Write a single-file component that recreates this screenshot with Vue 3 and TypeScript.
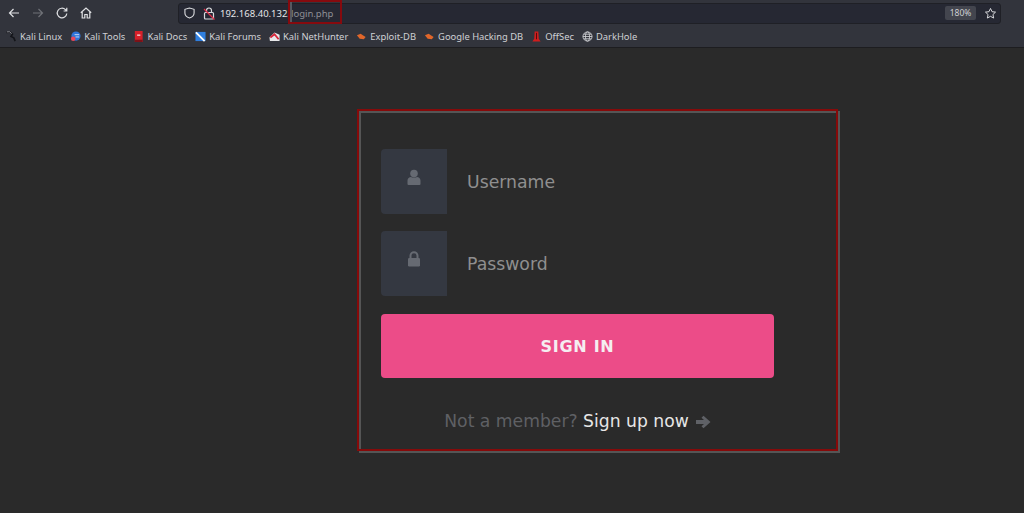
<script setup lang="ts">
interface Bookmark {
  label: string;
  icon: string;
}

const bookmarks: Bookmark[] = [
  { label: 'Kali Linux', icon: 'kali' },
  { label: 'Kali Tools', icon: 'tools' },
  { label: 'Kali Docs', icon: 'docs' },
  { label: 'Kali Forums', icon: 'forums' },
  { label: 'Kali NetHunter', icon: 'nethunter' },
  { label: 'Exploit-DB', icon: 'exploit' },
  { label: 'Google Hacking DB', icon: 'exploit' },
  { label: 'OffSec', icon: 'offsec' },
  { label: 'DarkHole', icon: 'globe' },
];
</script>

<template>
  <div class="page">
    <header class="chrome">
      <div class="toolbar">
        <nav class="nav-buttons">
          <svg class="nav-icon" viewBox="0 0 12 12"><path d="M11 6H1.500M5.500 2 1.500 6l4 4" /></svg>
          <svg class="nav-icon dim" viewBox="0 0 12 12"><path d="M1 6h9.500M6.500 2l4 4-4 4" /></svg>
          <svg class="nav-icon" viewBox="0 0 12 12"><path d="M10.800 6.500A4.800 4.800 0 1 1 9.400 2.600L10.800 4M10.800 0.800V4H7.600" /></svg>
          <svg class="nav-icon" viewBox="0 0 12 12"><path d="M0.800 5.800 6 1l5.200 4.800M2.200 4.800V11h2.600V7.500h2.400V11h2.600V4.800" /></svg>
        </nav>
        <div class="urlbar">
          <svg class="shield" viewBox="0 0 12 13"><path d="M6 1 1 2.500V6.500c0 2.700 2.400 4.600 5 5.500 2.600-.9 5-2.800 5-5.500V2.500z" /></svg>
          <svg class="lock" viewBox="0 0 12 13">
            <rect x="1.500" y="5.500" width="9" height="6.500" rx="1" />
            <path d="M3.500 5.500V3.500a2.500 2.500 0 0 1 5 0V5.500" />
            <path class="slash" d="M1 2 11.500 12.500" />
          </svg>
          <span class="host">192.168.40.132</span><span class="path">/login.php</span>
          <span class="zoom-badge">180%</span>
          <svg class="star" viewBox="0 0 16 16"><path d="M8 1.800l1.900 4 4.300.500-3.200 3 .900 4.300L8 11.500l-3.900 2.100.900-4.300-3.200-3 4.300-.500z" /></svg>
        </div>
        <div class="url-highlight"></div>
      </div>
      <div class="bookmarks">
        <span v-for="b in bookmarks" :key="b.label" class="bookmark">
          <svg class="fav" viewBox="0 0 12 12">
            <template v-if="b.icon === 'kali'">
              <path d="M0.500 1.500 4 1 7 3.500 5.500 6 8.500 7.500 10 11" fill="none" stroke="#14151a" stroke-width="1.800" />
              <path d="M1 1 4 0.800 6 3" fill="none" stroke="#b8bac0" stroke-width="0.800" />
            </template>
            <template v-else-if="b.icon === 'tools'">
              <circle cx="6.500" cy="5.500" r="5" fill="#2f74d8" />
              <circle cx="3.500" cy="8.500" r="2.500" fill="#e8485a" />
              <path d="M5 4h5M6 6.500h4" stroke="#cfe0f8" stroke-width="1" />
            </template>
            <template v-else-if="b.icon === 'docs'">
              <rect x="2" y="0" width="8.500" height="12" fill="#d6202a" />
              <rect x="2" y="9.500" width="8.500" height="2.500" fill="#7d1218" />
              <path d="M4.500 4.500h3.500" stroke="#fff" stroke-width="1.200" />
            </template>
            <template v-else-if="b.icon === 'forums'">
              <rect x="0.500" y="1" width="11" height="10" fill="#2f7fe0" />
              <path d="M1 1.500 10.500 11" stroke="#fff" stroke-width="2" />
            </template>
            <template v-else-if="b.icon === 'nethunter'">
              <path d="M0.500 7 6 1.500 11.500 4V11H1z" fill="#e8e8ea" />
              <path d="M1.500 7 6 3.500 10.500 9" fill="none" stroke="#d5263a" stroke-width="2" />
            </template>
            <template v-else-if="b.icon === 'exploit'">
              <path d="M1 4.500 5 3l5.500 3.500L8.500 9 4 8.500z" fill="#e0662a" />
            </template>
            <template v-else-if="b.icon === 'offsec'">
              <path d="M4 0.500h4L8.500 8.500l2 3h-9l2-3z" fill="#cf1d1d" />
              <path d="M6 2v7" stroke="#4a0a0a" stroke-width="1" />
            </template>
            <template v-else>
              <g fill="none" stroke="#d5d6d9" stroke-width="0.900">
                <circle cx="6" cy="6" r="5" />
                <ellipse cx="6" cy="6" rx="2.200" ry="5" />
                <path d="M1 6h10M1.800 3.500h8.400M1.800 8.500h8.400" />
              </g>
            </template>
          </svg>
          {{ b.label }}
        </span>
      </div>
    </header>

    <main class="content">
      <section class="card">
        <div class="field">
          <span class="field-icon">
            <svg viewBox="0 0 14 16"><circle cx="7" cy="4.500" r="3.800" /><path d="M0.500 15v-3.500C0.500 9.300 2.300 8 4 8c1 .8 5 .8 6 0 1.700 0 3.500 1.300 3.500 3.500V15a1 1 0 0 1-1 1h-11a1 1 0 0 1-1-1z" /></svg>
          </span>
          <span class="placeholder">Username</span>
        </div>
        <div class="field">
          <span class="field-icon">
            <svg viewBox="0 0 14 16"><path d="M2.500 7V4.800a4.500 4.500 0 0 1 9 0V7h-2V4.800a2.500 2.500 0 0 0-5 0V7z" /><rect x="1" y="7" width="12" height="8.500" rx="1.200" /></svg>
          </span>
          <span class="placeholder">Password</span>
        </div>
        <button class="submit" type="button">SIGN IN</button>
        <p class="signup">
          Not a member? <a class="signup-link">Sign up now</a>
          <svg class="arrow" viewBox="0 0 16 14"><path d="M8.500 0.800 15.500 7l-7 6.200-2-2L9 9H1V5h8L6.500 2.800z" /></svg>
        </p>
      </section>
    </main>
  </div>
</template>

<style>
html,
body {
  margin: 0;
  background: #2a2a2a;
}
</style>

<style scoped>
.page {
  height: 513px;
  display: flex;
  flex-direction: column;
  overflow: hidden;
  background: #2a2a2a;
  font-family: "DejaVu Sans", sans-serif;
}
.chrome {
  height: 47px;
  background: #32343c;
  border-bottom: 1px solid #1d1d20;
  font-family: "Noto Sans", "Open Sans", sans-serif;
  color: #d8d9dc;
}
.toolbar {
  position: relative;
  height: 25px;
  display: flex;
  align-items: center;
}
.nav-buttons {
  width: 178px;
  display: flex;
  gap: 12px;
  padding-left: 8px;
  box-sizing: border-box;
}
.nav-icon {
  width: 12px;
  height: 12px;
  fill: none;
  stroke: #dfe0e3;
  stroke-width: 1.200;
}
.nav-icon.dim {
  stroke: #6f7177;
}
.urlbar {
  width: 823px;
  height: 21px;
  margin-top: 1px;
  box-sizing: border-box;
  display: flex;
  align-items: center;
  background: #262833;
  border: 1px solid #1f2026;
  border-radius: 3px;
  font-size: 9.500px;
  padding-left: 5px;
}
.shield {
  width: 11px;
  height: 12px;
  fill: none;
  stroke: #dcdde0;
  stroke-width: 1.200;
}
.lock {
  width: 12px;
  height: 13px;
  margin-left: 8px;
  margin-right: 5px;
  fill: none;
  stroke: #d8d9dc;
  stroke-width: 1.200;
}
.lock .slash {
  stroke: #e0304a;
}
.host {
  color: #e4e5e7;
}
.path {
  color: #8f9096;
}
.zoom-badge {
  margin-left: auto;
  width: 31px;
  height: 14px;
  line-height: 14px;
  text-align: center;
  font-size: 8.500px;
  color: #cfd0d4;
  background: #43454e;
  border-radius: 2px;
}
.star {
  width: 13px;
  height: 13px;
  margin: 0 3px 0 8px;
  fill: none;
  stroke: #dcdde0;
  stroke-width: 1.200;
}
.url-highlight {
  position: absolute;
  left: 288px;
  top: 0;
  width: 54px;
  height: 24px;
  box-sizing: border-box;
  border: 2px solid #860a0e;
  box-shadow: inset 2px 0 0 #565860;
}
.bookmarks {
  height: 22px;
  display: flex;
  align-items: center;
  gap: 8px;
  padding-left: 6px;
  font-size: 9.400px;
  color: #cfd0d4;
}
.bookmark {
  display: flex;
  align-items: center;
  gap: 3px;
  white-space: nowrap;
}
.fav {
  width: 11px;
  height: 11px;
}
.content {
  flex: 1;
  padding: 61px 0 0 357px;
}
.card {
  width: 481px;
  height: 342px;
  box-sizing: border-box;
  padding: 38px 0 0 22px;
  border: 2px solid #860a0a;
  background: #2a2a2a;
  box-shadow: 2px 2px 0 #555, inset 2px 2px 0 #555;
}
.field {
  display: flex;
  align-items: center;
  height: 65px;
  margin-bottom: 17px;
}
.field-icon {
  width: 66px;
  height: 65px;
  display: flex;
  justify-content: center;
  padding-top: 20px;
  box-sizing: border-box;
  background: #343841;
  border-radius: 4px 0 0 4px;
}
.field-icon svg {
  width: 14px;
  height: 16px;
  fill: #666a72;
}
.placeholder {
  margin-left: 20px;
  font-size: 17.280px;
  color: #8f8f8f;
}
.submit {
  display: block;
  width: 393px;
  height: 64px;
  margin-top: 18px;
  border: 0;
  border-radius: 4px;
  background: #ec4c88;
  color: #f5eef1;
  font-family: inherit;
  font-size: 16px;
  font-weight: 700;
  letter-spacing: 0.700px;
}
.signup {
  width: 393px;
  margin: 33px 0 0;
  text-align: center;
  font-size: 17.200px;
  color: #5f6064;
}
.signup-link {
  color: #e6e6e6;
}
.arrow {
  width: 16px;
  height: 14px;
  margin-left: 6px;
  vertical-align: -2px;
  fill: #5f6166;
}
</style>
